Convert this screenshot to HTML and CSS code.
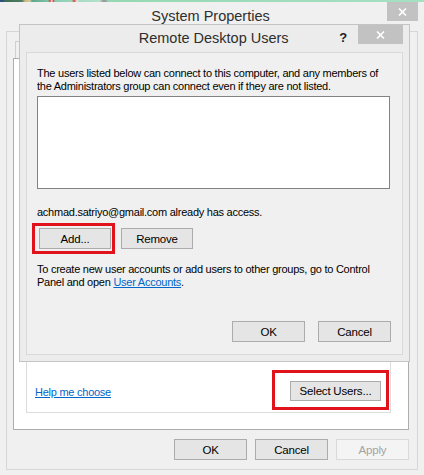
FILE: index.html
```html
<!DOCTYPE html>
<html lang="en">
<head>
    <meta charset="UTF-8">
    <meta name="viewport" content="width=device-width, initial-scale=1.0">
    <title>System Properties</title>
    <link rel="stylesheet" href="styles.css">
</head>
<body>
    <div class="desktop"></div>

    <!-- System Properties window -->
    <div class="title-bar">
        <span></span>
        <span class="title">System Properties</span>
        <span class="close">
            <svg width="9" height="8" viewBox="0 0 9 8"><path d="M1 0.5 L8 7.5 M8 0.5 L1 7.5" stroke="#fff" stroke-width="1.6"/></svg>
        </span>
    </div>

    <div class="sheet">
        <div class="tabs"><div class="tab"></div></div>
        <div class="page">
            <div class="group">
                <a class="link" href="#">Help me choose</a>
                <div class="mark mark-select">
                    <button class="button button-select">Select Users...</button>
                </div>
            </div>
        </div>
        <div class="actions">
            <button class="button">OK</button>
            <button class="button">Cancel</button>
            <button class="button" disabled>Apply</button>
        </div>
    </div>

    <!-- Remote Desktop Users dialog -->
    <div class="dialog">
        <div class="dialog-bar">
            <span class="title">Remote Desktop Users</span>
            <span class="help">?</span>
            <span class="close close-dialog">
                <svg width="9" height="8" viewBox="0 0 9 8"><path d="M1 0.5 L8 7.5 M8 0.5 L1 7.5" stroke="#fff" stroke-width="1.6"/></svg>
            </span>
        </div>
        <div class="dialog-body">
            <p class="text intro">The users listed below can connect to this computer, and any members of the Administrators group can connect even if they are not listed.</p>
            <div class="listbox"></div>
            <p class="text access">achmad.satriyo@gmail.com already has access.</p>
            <div class="row">
                <div class="mark mark-add">
                    <button class="button">Add...</button>
                </div>
                <button class="button">Remove</button>
            </div>
            <p class="text create">To create new user accounts or add users to other groups, go to Control<br>Panel and open <a class="link" href="#">User Accounts</a>.</p>
            <div class="dialog-actions">
                <button class="button">OK</button>
                <button class="button">Cancel</button>
            </div>
        </div>
    </div>
</body>
</html>
```

FILE: styles.css
```css
* {
    box-sizing: border-box;
}
body {
    margin: 0;
    width: 424px;
    height: 475px;
    overflow: hidden;
    position: relative;
    background: #f0f0f0;
    font-family: "Liberation Sans", Arial, sans-serif;
    font-size: 11px;
    letter-spacing: -0.25px;
    color: #000;
}
.desktop {
    height: 2px;
    background: linear-gradient(90deg, #2b4f7e 0, #2b4f7e 3px, #3c6a58 4px, #4f7d62 22px, #c9b985 25px, #d8c99a 30px, #5fa78e 32px, #7fc2a6 48px, #d8433f 50px, #f2f2f2 52px, #cc3a36 53px, #8acdb1 55px, #9ad6bb 72px, #d8433f 74px, #e9e9e9 77px, #a8dcc4 79px, #b4e0cb 100px, #9a9a9a 103px, #a0a0a0 106px, #96d8b4 108px, #a6e0c2 424px);
}
.title-bar {
    height: 29px;
    display: grid;
    grid-template-columns: 1fr auto 1fr;
    padding-right: 6px;
}
.title {
    font-size: 14.5px;
    letter-spacing: 0;
    color: #2e2e2e;
    padding-top: 6px;
}
.title-bar .title {
    padding-left: 3px;
}
.close {
    justify-self: end;
    width: 31px;
    height: 19px;
    background: #c2c2c2;
    display: flex;
    align-items: center;
    justify-content: center;
}

/* property sheet */
.sheet {
    margin: 0 6px;
    height: 439px;
    border: 1px solid #d6d6d6;
    padding: 9px 8px 0 6px;
}
.tabs {
    height: 17px;
    padding-left: 2px;
}
.tab {
    width: 80px;
    height: 17px;
    border: 1px solid #d0d0d0;
    border-bottom: none;
}
.page {
    height: 372px;
    background: #fff;
    border: 1px solid #adadad;
    display: flex;
    flex-direction: column;
    justify-content: flex-end;
    padding: 0 17px 16px 12px;
}
.group {
    height: 120px;
    border: 1px solid #dcdcdc;
    display: flex;
    align-items: flex-end;
    justify-content: space-between;
    padding: 0 1px 2px 8px;
}
.group .link {
    margin-bottom: 12px;
}
.link {
    color: #0066cc;
    text-decoration: underline;
}
.mark {
    border: 3px solid #e0121c;
}
.mark-select {
    padding: 8px 5px 6px 15px;
}
.mark-add {
    padding: 2px 1px 2px 4px;
    margin-left: -5px;
}
.actions {
    display: flex;
    justify-content: flex-end;
    gap: 8px;
    margin-top: 9px;
}
.button {
    width: 73px;
    height: 21px;
    padding: 0;
    border: 1px solid #acacac;
    background: #e5e5e5;
    font-family: inherit;
    font-size: 11.5px;
    letter-spacing: -0.2px;
    color: #000;
    display: block;
}
.button-select {
    width: 91px;
    height: 20px;
}
.button:disabled {
    background: #f4f4f4;
    border-color: #d9d9d9;
    color: #a3a3a3;
}

/* dialog over the sheet */
.dialog {
    position: absolute;
    left: 19px;
    top: 24px;
    width: 391px;
    height: 338px;
    background: #ececec;
    border: 1px solid #c4c4c4;
    display: flex;
    flex-direction: column;
}
.dialog-bar {
    height: 27px;
    display: flex;
    align-items: flex-start;
    padding-right: 6px;
}
.dialog-bar .title {
    flex: 1;
    text-align: center;
    padding-top: 5px;
    padding-left: 68px;
}
.help {
    font-size: 13px;
    font-weight: bold;
    color: #222;
    padding-top: 5px;
    margin-right: 11px;
}
.close-dialog {
    width: 45px;
}
.dialog-body {
    flex: 1;
    margin: 0 6px 6px;
    background: #f0f0f0;
    border: 1px solid #d9d9d9;
    display: flex;
    flex-direction: column;
    padding: 14px 11px 12px 10px;
}
.text {
    margin: 0;
    line-height: 13px;
}
.listbox {
    margin-top: 3px;
    width: 353px;
    height: 93px;
    background: #fff;
    border: 1px solid #828282;
}
.access {
    margin-top: 17px;
}
.row {
    display: flex;
    align-items: center;
    gap: 6px;
    margin-top: 4px;
}
.row .button {
    width: 72px;
}
.create {
    margin-top: 9px;
}
.dialog-actions {
    margin-top: auto;
    display: flex;
    justify-content: flex-end;
    gap: 13px;
}
```
